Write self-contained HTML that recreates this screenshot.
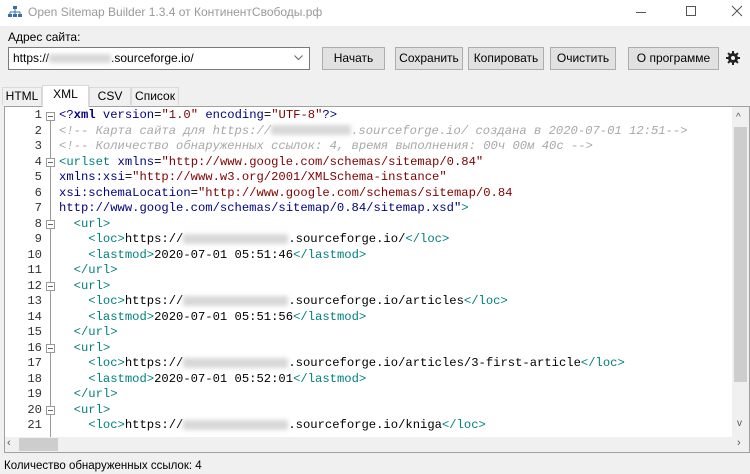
<!DOCTYPE html><html><head><meta charset="utf-8"><style>
*{margin:0;padding:0;box-sizing:border-box}
body{width:750px;height:474px;background:#f0f0f0;font-family:"Liberation Sans","DejaVu Sans",sans-serif;font-size:12px;color:#000;position:relative;overflow:hidden}
.abs{position:absolute}
.title{left:0;top:0;width:750px;height:26px;background:#fff}
.btn{position:absolute;top:47px;height:23px;background:#e1e1e1;border:1px solid #adadad;text-align:center;line-height:21px;font-size:12px}
.tab{position:absolute;top:87px;height:18px;line-height:17px;font-size:12px;text-align:center;border:1px solid #d9d9d9;border-bottom:none;background:#f0f0f0}
.ed{left:4px;top:106px;width:746px;height:347px;background:#fff;border:1px solid #a0a0a0}
.code{position:absolute;left:59px;top:108px;font-family:"Liberation Mono",monospace;font-size:12.2px;line-height:15.5px;white-space:pre}
.nums{position:absolute;left:2px;top:108px;width:40px;text-align:right;font-family:"Liberation Mono",monospace;font-size:12.2px;line-height:15.5px;color:#333;white-space:pre}
.t{color:#008080}.a{color:#000080}.v{color:#800000}.c{color:#a8a8a8;font-style:italic}
.bl{display:inline-block;width:105px;height:10px;background:#d8d8d8;filter:blur(2px);vertical-align:middle}
.fold{position:absolute;width:9px;height:9px;border:1px solid #999;background:#fff;left:46px}
.fold:after{content:"";position:absolute;left:1px;top:3px;width:5px;height:1px;background:#666}
</style></head><body>
<div class="abs title"></div>
<svg class="abs" style="left:8px;top:6px" width="14" height="12" viewBox="0 0 14 12"><rect x="5" y="0" width="4" height="3" fill="#3a6fa5"/><path d="M7 3v3M2 6h10M2 6v2M7 6v2M12 6v2" stroke="#3a6fa5" fill="none"/><rect x="0" y="8" width="4" height="3" fill="#3a6fa5"/><rect x="5" y="8" width="4" height="3" fill="#3a6fa5"/><rect x="10" y="8" width="4" height="3" fill="#3a6fa5"/></svg>
<div class="abs" style="left:28px;top:5px;color:#999;font-size:12px">Open Sitemap Builder 1.3.4 от КонтинентСвободы.рф</div>
<div class="abs" style="left:636px;top:12px;width:10px;height:1px;background:#555"></div>
<div class="abs" style="left:686px;top:6px;width:10px;height:10px;border:1px solid #555"></div>
<svg class="abs" style="left:731px;top:5px" width="12" height="12"><path d="M1 1L11 11M11 1L1 11" stroke="#555"/></svg>
<div class="abs" style="left:8px;top:30px">Адрес сайта:</div>
<div class="abs" style="left:8px;top:47px;width:302px;height:23px;background:#fff;border:1px solid #7a7a7a;line-height:21px;padding-left:4px">https://<span class="bl" style="width:62px;height:9px"></span>.sourceforge.io/</div>
<svg class="abs" style="left:294px;top:55px" width="9" height="6"><path d="M0.5 0.5L4.5 4.5L8.5 0.5" stroke="#666" fill="none"/></svg>
<div class="btn" style="left:322px;width:63px">Начать</div>
<div class="btn" style="left:395px;width:68px">Сохранить</div>
<div class="btn" style="left:468px;width:76px">Копировать</div>
<div class="btn" style="left:550px;width:66px">Очистить</div>
<div class="btn" style="left:628px;width:91px">О программе</div>
<svg class="abs" style="left:726px;top:51px" width="14" height="14" viewBox="0 0 14 14"><g fill="#222"><circle cx="7" cy="7" r="5"/><rect x="6" y="0" width="2" height="14"/><rect x="0" y="6" width="14" height="2"/><rect x="6" y="0" width="2" height="14" transform="rotate(45 7 7)"/><rect x="6" y="0" width="2" height="14" transform="rotate(-45 7 7)"/></g><circle cx="7" cy="7" r="2" fill="#f0f0f0"/></svg>
<div class="tab" style="left:2px;width:40px">HTML</div>
<div class="tab" style="left:42px;top:85px;height:22px;width:47px;background:#fff;z-index:2">XML</div>
<div class="tab" style="left:89px;width:42px">CSV</div>
<div class="tab" style="left:131px;width:48px">Список</div>
<div class="abs ed"></div>
<div class="abs" style="left:50px;top:112px;width:1px;height:325px;background:#999"></div>
<div class="fold" style="top:112px"></div><div class="fold" style="top:158px"></div><div class="fold" style="top:220px"></div><div class="fold" style="top:282px"></div><div class="fold" style="top:344px"></div><div class="fold" style="top:406px"></div>
<div class="nums">1
2
3
4
5
6
7
8
9
10
11
12
13
14
15
16
17
18
19
20
21</div>
<div class="code"><span class="a">&lt;?<b>xml</b> version</span>=<span class="v">"1.0"</span> <span class="a">encoding</span>=<span class="v">"UTF-8"</span><span class="a">?&gt;</span>
<span class="c">&lt;!-- Карта сайта для https://<span class="bl" style="width:80px"></span>.sourceforge.io/ создана в 2020-07-01 12:51--&gt;</span>
<span class="c">&lt;!-- Количество обнаруженных ссылок: 4, время выполнения: 00ч 00м 40с --&gt;</span>
<span class="t">&lt;urlset</span> <span class="a">xmlns</span>=<span class="v">"http://www.google.com/schemas/sitemap/0.84"</span>
<span class="a">xmlns:xsi</span>=<span class="v">"http://www.w3.org/2001/XMLSchema-instance"</span>
<span class="a">xsi:schemaLocation</span>=<span class="v">"http://www.google.com/schemas/sitemap/0.84</span>
<span class="a">http://www.google.com/schemas/sitemap/0.84/sitemap.xsd"</span><span class="t">&gt;</span>
  <span class="t">&lt;url&gt;</span>
    <span class="t">&lt;loc&gt;</span>https://<span class="bl"></span>.sourceforge.io/<span class="t">&lt;/loc&gt;</span>
    <span class="t">&lt;lastmod&gt;</span>2020-07-01 05:51:46<span class="t">&lt;/lastmod&gt;</span>
  <span class="t">&lt;/url&gt;</span>
  <span class="t">&lt;url&gt;</span>
    <span class="t">&lt;loc&gt;</span>https://<span class="bl"></span>.sourceforge.io/articles<span class="t">&lt;/loc&gt;</span>
    <span class="t">&lt;lastmod&gt;</span>2020-07-01 05:51:56<span class="t">&lt;/lastmod&gt;</span>
  <span class="t">&lt;/url&gt;</span>
  <span class="t">&lt;url&gt;</span>
    <span class="t">&lt;loc&gt;</span>https://<span class="bl"></span>.sourceforge.io/articles/3-first-article<span class="t">&lt;/loc&gt;</span>
    <span class="t">&lt;lastmod&gt;</span>2020-07-01 05:52:01<span class="t">&lt;/lastmod&gt;</span>
  <span class="t">&lt;/url&gt;</span>
  <span class="t">&lt;url&gt;</span>
    <span class="t">&lt;loc&gt;</span>https://<span class="bl"></span>.sourceforge.io/kniga<span class="t">&lt;/loc&gt;</span></div>
<div class="abs" style="left:732px;top:107px;width:17px;height:330px;background:#f0f0f0"></div>
<div class="abs" style="left:734px;top:127px;width:13px;height:255px;background:#cdcdcd"></div>
<div class="abs" style="left:736px;top:112px;font-size:10px;color:#555">^</div>
<div class="abs" style="left:737px;top:418px;font-size:10px;color:#555">v</div>
<div class="abs" style="left:5px;top:437px;width:744px;height:15px;background:#f0f0f0"></div>
<div class="abs" style="left:19px;top:438px;width:39px;height:13px;background:#cdcdcd"></div>
<div class="abs" style="left:7px;top:437px;font-size:11px;color:#555">‹</div>
<div class="abs" style="left:737px;top:437px;font-size:11px;color:#555">›</div>
<div class="abs" style="left:4px;top:460px;font-size:11.5px">Количество обнаруженных ссылок: 4</div>
</body></html>
